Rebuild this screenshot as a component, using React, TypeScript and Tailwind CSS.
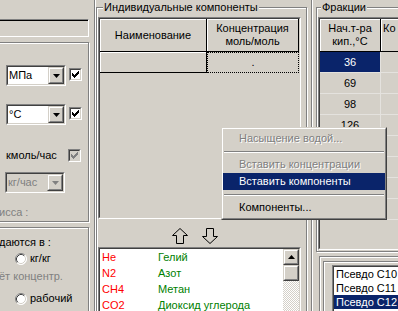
import React from 'react';

const CHECK = ['......#', '.....##', '#...###', '##.###.', '#####..', '.###...', '..#....'];

type BoxProps = { className?: string; inner?: string; children?: React.ReactNode };

// classic 2px sunken frame (edits, lists, grids)
const Sunken: React.FC<BoxProps> = ({ className = '', inner = '', children }) => (
  <div className={`border border-t-[#808080] border-l-[#808080] border-b-white border-r-white ${className}`}>
    <div className={`h-full border border-t-[#404040] border-l-[#404040] border-b-[#d4d0c8] border-r-[#d4d0c8] ${inner}`}>
      {children}
    </div>
  </div>
);

// classic 2px raised frame (buttons)
const Raised: React.FC<BoxProps> = ({ className = '', inner = '', children }) => (
  <div className={`bg-[#d4d0c8] border border-t-[#d4d0c8] border-l-[#d4d0c8] border-b-[#404040] border-r-[#404040] ${className}`}>
    <div className={`h-full border border-t-white border-l-white border-b-[#808080] border-r-[#808080] flex items-center justify-center ${inner}`}>
      {children}
    </div>
  </div>
);

const CheckBox: React.FC<{ disabled?: boolean; className?: string }> = ({ disabled, className = '' }) => (
  <Sunken className={`w-[13px] h-[13px] shrink-0 ${className}`} inner={disabled ? 'bg-[#d4d0c8]' : 'bg-white'}>
    <svg width="9" height="9" viewBox="0 0 9 9" shapeRendering="crispEdges" className="block">
      {CHECK.flatMap((row, y) =>
        row.split('').map((c, x) =>
          c === '#' ? <rect key={`${x}-${y}`} x={x + 1} y={y + 1} width="1" height="1" fill={disabled ? '#808080' : '#000'} /> : null
        )
      )}
    </svg>
  </Sunken>
);

const Radio = () => (
  <svg width="12" height="12" viewBox="0 0 12 12" className="block shrink-0">
    <circle cx="6" cy="6" r="5.5" fill="#fff" />
    <path d="M2.11 9.89 A5.5 5.5 0 0 1 9.89 2.11" stroke="#808080" fill="none" />
    <path d="M9.89 2.11 A5.5 5.5 0 0 1 2.11 9.89" stroke="#fff" fill="none" />
    <path d="M2.82 9.18 A4.5 4.5 0 0 1 9.18 2.82" stroke="#404040" fill="none" />
    <path d="M9.18 2.82 A4.5 4.5 0 0 1 2.82 9.18" stroke="#d4d0c8" fill="none" />
  </svg>
);

const Combo: React.FC<{ value: string; disabled?: boolean }> = ({ value, disabled }) => (
  <Sunken className="w-[60px] h-[21px] shrink-0" inner={`flex ${disabled ? 'bg-[#d4d0c8]' : 'bg-white'}`}>
    <span className={`flex-1 pl-[1px] leading-[17px] ${disabled ? 'text-[#808080]' : ''}`}>{value}</span>
    <Raised className="w-[16px] h-full">
      <svg width="7" height="4" viewBox="0 0 7 4" className="block">
        <polygon points="0,0 7,0 3.5,4" fill={disabled ? '#808080' : '#000'} />
      </svg>
    </Raised>
  </Sunken>
);

const etched = 'border border-[#808080] shadow-[inset_1px_1px_0_#fff,1px_1px_0_#fff]';

const LeftPane = () => (
  <div className="w-[90px] h-full shrink-0 overflow-hidden flex flex-col">
    <div className="mt-[19px] h-[18px] -ml-[2px] w-[91px] shrink-0 border-t border-t-[#808080] border-b border-b-white border-r border-r-white">
      <div className="h-full border-t border-t-black" />
    </div>

    <div className={`mt-[5px] -ml-[2px] w-[91px] h-[180px] shrink-0 flex flex-col ${etched}`}>
      <div className="mt-[22px] flex">
        <div className="ml-[7px]"><Combo value="МПа" /></div>
        <CheckBox className="ml-[3px] mt-[3px]" />
      </div>
      <div className="mt-[18px] flex">
        <div className="ml-[7px]"><Combo value="°C" /></div>
        <CheckBox className="ml-[3px] mt-[3px]" />
      </div>
      <div className="mt-[24px] flex h-[13px]">
        <span className="ml-[7px] w-[62px] whitespace-nowrap">кмоль/час</span>
        <CheckBox disabled />
      </div>
      <div className="mt-[10px] ml-[6px]"><Combo value="кг/час" disabled /></div>
      <div className="mt-[13px] ml-[0px] text-[#808080] whitespace-nowrap">исса :</div>
    </div>

    <div className={`mt-[5px] -ml-[2px] w-[91px] h-[100px] shrink-0 flex flex-col ${etched}`}>
      <div className="mt-[8px] whitespace-nowrap">даются в :</div>
      <div className="mt-[3px] ml-[16px] h-[13px] flex items-center gap-[3px]">
        <Radio />
        <span>кг/кг</span>
      </div>
      <div className="mt-[5px] text-[#808080] whitespace-nowrap">ёт концентр.</div>
      <div className="mt-[9px] ml-[16px] h-[13px] flex items-center gap-[3px]">
        <Radio />
        <span>рабочий</span>
      </div>
    </div>
  </div>
);

const headCell = 'border-r border-b border-black shadow-[inset_1px_1px_0_#fff] flex items-center justify-center text-center';

const Arrow: React.FC<{ down?: boolean }> = ({ down }) => (
  <svg width="16" height="16" viewBox="0 0 16 16" className={`block ${down ? 'rotate-180' : ''}`}>
    <polygon points="8,0.5 15.5,7.5 11.5,7.5 11.5,15.5 4.5,15.5 4.5,7.5 0.5,7.5" fill="none" stroke="#000" />
  </svg>
);

const components = [
  ['He', 'Гелий'],
  ['N2', 'Азот'],
  ['CH4', 'Метан'],
  ['CO2', 'Диоксид углерода'],
];

const MiddlePane = () => (
  <div className={`mt-[7px] w-[211px] h-[330px] shrink-0 relative flex flex-col ${etched}`}>
    <span className="absolute left-[6px] -top-[7px] px-[1px] bg-[#d4d0c8] whitespace-nowrap">Индивидуальные компоненты</span>

    <Sunken className="ml-[1px] mt-[9px] w-[203px] h-[202px] shrink-0" inner="flex flex-col">
      <div className="flex h-[33px]">
        <div className={`w-[107px] ${headCell}`}>Наименование</div>
        <div className={`w-[92px] ${headCell}`}>Концентрация<br />моль/моль</div>
      </div>
      <div className="flex h-[21px]">
        <div className={`w-[107px] ${headCell}`} />
        <div className="w-[92px] border border-dotted border-black flex items-center justify-center">.</div>
      </div>
    </Sunken>

    <div className="mt-[9px] flex ml-[75px] gap-[14px]">
      <Arrow />
      <Arrow down />
    </div>

    <Sunken className="ml-[1px] mt-[3px] w-[203px] h-[80px] shrink-0" inner="flex bg-white">
      <div className="flex-1 flex flex-col">
        {components.map(([f, n]) => (
          <div key={f} className="h-[16px] flex items-center whitespace-nowrap">
            <span className="w-[58px] pl-[2px] text-[#ff0000]">{f}</span>
            <span className="text-[#008000]">{n}</span>
          </div>
        ))}
      </div>
      <div className="w-[16px] flex flex-col">
        <Raised className="h-[16px] shrink-0">
          <svg width="7" height="4" viewBox="0 0 7 4" className="block">
            <polygon points="0,4 7,4 3.5,0" fill="#000" />
          </svg>
        </Raised>
        <Raised className="h-[16px] shrink-0" />
        <div className="flex-1 bg-[repeating-conic-gradient(#fff_0%_25%,#d4d0c8_0%_50%)] bg-[length:2px_2px]" />
      </div>
    </Sunken>
  </div>
);

const fractions = ['36', '69', '98', '126', '151', '174', '196', '216'];

const RightPane = () => (
  <div className="ml-[3px] w-[90px] h-full shrink-0 flex flex-col">
    <div className={`mt-[7px] w-[100px] h-[245px] shrink-0 relative flex flex-col ${etched}`}>
      <span className="absolute left-[4px] -top-[7px] px-[1px] bg-[#d4d0c8] whitespace-nowrap">Фракции</span>
      <Sunken className="ml-[1px] mt-[9px] w-[96px] h-[233px] shrink-0" inner="flex flex-col overflow-hidden">
        <div className="flex h-[33px] shrink-0">
          <div className={`w-[61px] shrink-0 ${headCell}`}>Нач.т-ра<br />кип.,°С</div>
          <div className="w-[60px] shrink-0 border-r border-b border-black shadow-[inset_1px_1px_0_#fff] pt-[3px] pl-[2px] whitespace-nowrap">Ко</div>
        </div>
        {fractions.map((v, i) => (
          <div key={v} className="flex h-[21px] shrink-0">
            <div className={`w-[61px] shrink-0 border-r border-b border-[#e4e2de] flex items-center justify-center ${i === 0 ? 'bg-[#0a246a] text-white' : ''}`}>{v}</div>
            <div className="w-[60px] shrink-0 border-r border-b border-[#e4e2de]" />
          </div>
        ))}
      </Sunken>
    </div>

    <div className={`mt-[4px] ml-[3px] w-[100px] h-[70px] shrink-0 flex flex-col ${etched}`}>
      <div className={`mt-[4px] ml-[3px] w-[100px] h-[60px] shrink-0 flex flex-col ${etched}`}>
        <Sunken className="mt-[3px] ml-[8px] w-[80px] h-[60px] shrink-0" inner="bg-white flex flex-col">
          <div className="h-[14px] flex items-center pl-[2px] whitespace-nowrap">Псевдо С10</div>
          <div className="h-[14px] flex items-center pl-[2px] whitespace-nowrap">Псевдо С11</div>
          <div className="h-[14px] flex items-center pl-[2px] whitespace-nowrap bg-[#0a246a] text-white">Псевдо С12</div>
        </Sunken>
      </div>
    </div>
  </div>
);

const menuItem = 'h-[17px] pl-[16px] flex items-center whitespace-nowrap';
const disabledText = 'text-[#808080] [text-shadow:1px_1px_0_#fff]';

const Separator = () => (
  <div className="h-[9px] flex items-center px-[1px]">
    <div className="flex-1 h-[2px] border-t border-t-[#808080] border-b border-b-white" />
  </div>
);

const ContextMenu = () => (
  <div className="absolute left-[221px] top-[127px] w-[166px] h-[93px] bg-[#d4d0c8] border border-t-[#d4d0c8] border-l-[#d4d0c8] border-b-[#404040] border-r-[#404040]">
    <div className="h-full border border-t-white border-l-white border-b-[#808080] border-r-[#808080] pt-[1px]">
      <div className={`${menuItem} ${disabledText}`}>Насыщение водой...</div>
      <Separator />
      <div className={`${menuItem} ${disabledText}`}>Вставить концентрации</div>
      <div className={`${menuItem} bg-[#0a246a] text-white`}>Вставить компоненты</div>
      <Separator />
      <div className={menuItem}>Компоненты...</div>
    </div>
  </div>
);

export default function App() {
  return (
    <div className="w-[398px] h-[311px] overflow-hidden bg-[#d4d0c8] flex relative text-black text-[11px] leading-[13px] font-['Liberation_Sans',Arial,sans-serif]">
      <LeftPane />
      <div className="ml-[4px] w-[2px] h-full shrink-0 border-l border-l-[#808080] border-r border-r-white" />
      <MiddlePane />
      <div className="ml-[4px] w-[2px] h-full shrink-0 border-l border-l-[#808080] border-r border-r-white" />
      <RightPane />
      <ContextMenu />
    </div>
  );
}
